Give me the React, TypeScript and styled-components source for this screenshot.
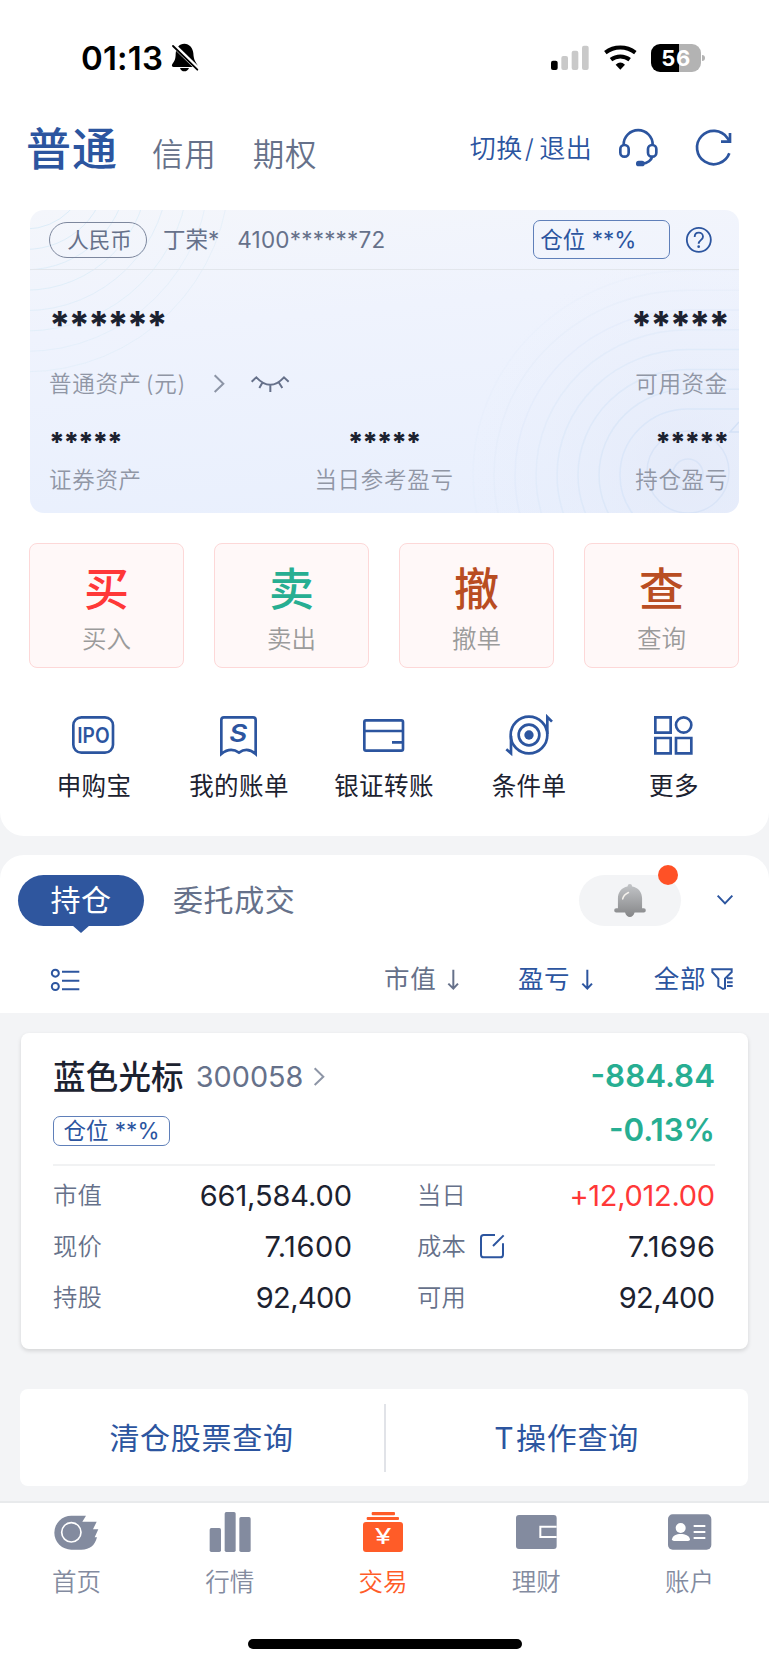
import React from 'react';
import styled, { createGlobalStyle } from 'styled-components';

const blue = '#2c559f';
const slate = '#66718a';
const muted = '#9096a5';
const ink = '#1c2230';
const green = '#27ae92';
const red = '#ff3838';
const orange = '#ff5c28';

const Global = createGlobalStyle`
  * { box-sizing: border-box; }
  body {
    margin: 0;
    background: #f3f4f6;
    font-family: Inter, 'Noto Sans CJK SC', sans-serif;
    line-height: 1.3;
    color: ${ink};
  }
  svg { display: block; flex: none; }
`;

const Screen = styled.main`
  width: 769px;
  height: 1665px;
  display: flex;
  flex-direction: column;
  overflow: hidden;
  background: #f3f4f6;
  white-space: nowrap;
`;

const AccountPanel = styled.section`
  height: 836px;
  flex: none;
  background: #fff;
  border-radius: 0 0 24px 24px;
`;

/* ---------- status bar ---------- */
const StatusBar = styled.div`
  height: 115px;
  padding: 0 64px 0 81px;
  display: flex;
  align-items: center;
  color: #000;
`;
const Clock = styled.span`
  font-size: 33px;
  line-height: 40px;
  font-weight: 560;
  letter-spacing: 0.2px;
  width: 89px;
`;
const StatusIcons = styled.div`
  margin-left: auto;
  display: flex;
  align-items: center;
  gap: 14.5px;
`;
const Battery = styled.div`
  display: flex;
  align-items: center;
  gap: 1px;
  &::after {
    content: '';
    width: 3px;
    height: 6px;
    background: #b3b3b3;
    border-radius: 0 3px 3px 0;
  }
`;
const BatteryBody = styled.div`
  width: 50px;
  height: 28px;
  border-radius: 9px;
  background: linear-gradient(90deg, #000 56%, #b3b3b3 56%);
  color: #fff;
  font-size: 22px;
  line-height: 28px;
  font-weight: 650;
  letter-spacing: 0.6px;
  text-align: center;
`;

/* ---------- header ---------- */
const Header = styled.header`
  height: 66px;
  padding: 0 38px 0 26px;
  display: flex;
  align-items: center;
`;
const ActiveAccount = styled.h1`
  margin: 0 34px 0 0;
  padding-top: 3px;
  font-size: 45px;
  line-height: 66px;
  font-weight: 500;
  color: ${blue};
  letter-spacing: 1px;
`;
const AccountTab = styled.span`
  margin-right: 36px;
  padding-top: 13px;
  font-size: 31.5px;
  font-weight: 350;
  line-height: 40px;
  letter-spacing: 0.8px;
  color: ${slate};
`;
const HeaderTools = styled.div`
  margin-left: auto;
  display: flex;
  align-items: center;
`;
const SwitchLink = styled.a`
  padding-top: 2px;
  color: ${blue};
  font-size: 26px;
  line-height: 40px;
  font-weight: 350;
  letter-spacing: 0.5px;
  margin-right: 27px;
  span { margin: 0 5px 0 2px; }
`;

/* ---------- asset card ---------- */
const AssetCard = styled.section`
  position: relative;
  height: 303px;
  margin: 29px 30px 0;
  border-radius: 14px;
  overflow: hidden;
  background: linear-gradient(175deg, #f4f6fb 0%, #eff3fd 35%, #e8effd 100%);
`;
const CardPattern = styled.svg`
  position: absolute;
  inset: 0;
`;
const CardHead = styled.div`
  position: relative;
  height: 60px;
  padding: 0 27px 0 19px;
  display: flex;
  align-items: center;
  border-bottom: 1px solid #e2e6ec;
  color: ${slate};
  font-size: 22.5px;
`;
const Currency = styled.span`
  width: 98px;
  height: 36px;
  border: 1px solid #7d879d;
  border-radius: 18px;
  font-size: 21.5px;
  line-height: 34px;
  text-align: center;
  padding-left: 3px;
`;
const Owner = styled.span`
  margin-left: 16px;
`;
const AccountNo = styled.span`
  margin-left: 18px;
  letter-spacing: 0.2px;
`;
const CardRatio = styled.span`
  margin-left: auto;
  margin-right: 16px;
  width: 137px;
  height: 39px;
  padding-left: 6px;
  border: 1px solid #5f7fb9;
  border-radius: 7px;
  line-height: 38px;
  color: ${blue};
  font-size: 22.5px;
`;
const CardBody = styled.div`
  position: relative;
  padding: 0 11px 0 19px;
`;
const Spread = styled.div<{ $h: number }>`
  height: ${(p) => p.$h}px;
  display: flex;
  justify-content: space-between;
  align-items: center;
`;
const Triple = styled.div<{ $h: number }>`
  height: ${(p) => p.$h}px;
  display: grid;
  grid-template-columns: 1fr auto 1fr;
  align-items: center;
  > :nth-child(2) { margin-right: 9px; }
  > :last-child { justify-self: end; }
`;
const TotalMask = styled.span`
  padding-top: 18px;
  font-size: 37px;
  line-height: 40px;
  font-weight: 800;
  letter-spacing: -2.1px;
`;
const Mask = styled.span`
  padding-top: 21px;
  font-size: 27px;
  line-height: 30px;
  font-weight: 800;
  letter-spacing: -1.2px;
`;
const CardLabel = styled.span`
  display: flex;
  align-items: center;
  font-size: 22.5px;
  font-weight: 350;
  letter-spacing: 0.7px;
  color: ${muted};
`;
const Unit = styled.span`
  margin: 0 28px 0 4px;
`;
const EyeButton = styled.span`
  margin-left: 27px;
`;

/* ---------- actions ---------- */
const Actions = styled.div`
  margin: 30px 30px 0 29px;
  display: grid;
  grid-template-columns: repeat(4, 1fr);
  gap: 30px;
`;
const ActionTile = styled.button`
  height: 125px;
  padding: 20px 0 0;
  border: 1px solid #fdd8d8;
  border-radius: 8px;
  background: #fff8f8;
  font-family: inherit;
  display: flex;
  flex-direction: column;
  align-items: center;
`;
const ActionGlyph = styled.span<{ $c: string }>`
  color: ${(p) => p.$c};
  font-size: 45px;
  line-height: 52px;
  font-weight: 500;
`;
const ActionLabel = styled.span`
  margin-top: 8px;
  font-size: 24.5px;
  line-height: 30px;
  font-weight: 350;
  color: #9b9b9b;
`;

const Shortcuts = styled.nav`
  margin: 42px 23px 0 21px;
  display: grid;
  grid-template-columns: repeat(5, 1fr);
`;
const Shortcut = styled.a`
  display: flex;
  flex-direction: column;
  align-items: center;
`;
const IconSlot = styled.div`
  height: 50px;
  display: flex;
  align-items: center;
`;
const ShortcutLabel = styled.span`
  padding-left: 1px;
  font-size: 24.5px;
  line-height: 52px;
  letter-spacing: 0.4px;
`;

/* ---------- positions ---------- */
const PositionsHead = styled.section`
  height: 158px;
  flex: none;
  margin-top: 19px;
  background: #fff;
  border-radius: 24px 24px 0 0;
`;
const TabRow = styled.div`
  height: 70px;
  padding: 20px 36px 0 18px;
  display: flex;
  align-items: center;
  font-size: 30px;
`;
const ActiveTab = styled.span`
  position: relative;
  width: 126px;
  height: 51px;
  border-radius: 26px;
  background: #2f569e;
  color: #fff;
  line-height: 50px;
  letter-spacing: 0.4px;
  text-align: center;
  &::after {
    content: '';
    position: absolute;
    left: 54px;
    top: 50px;
    border: 9px solid transparent;
    border-top: 8px solid #2f569e;
    border-bottom: 0;
  }
`;
const Tab = styled.span`
  margin-left: 29px;
  color: ${slate};
  letter-spacing: 0.6px;
`;
const AlertPill = styled.button`
  position: relative;
  margin: 0 36px 0 auto;
  width: 102px;
  height: 51px;
  border: 0;
  border-radius: 26px;
  background: #f3f4f6;
  display: grid;
  place-items: center;
  &::after {
    content: '';
    position: absolute;
    right: 3px;
    top: -10px;
    width: 20px;
    height: 20px;
    border-radius: 50%;
    background: #ff5126;
  }
`;
const FilterRow = styled.div`
  height: 68px;
  margin-top: 20px;
  padding: 0 36px 0 51px;
  display: flex;
  align-items: center;
`;
const Filter = styled.span<{ $c: string; $gap: number; $ml: string }>`
  display: flex;
  align-items: center;
  gap: ${(p) => p.$gap}px;
  margin-left: ${(p) => p.$ml};
  font-size: 25.5px;
  line-height: 40px;
  letter-spacing: 0.6px;
  color: ${(p) => p.$c};
`;

const StockCard = styled.article`
  height: 316px;
  flex: none;
  margin: 20px 21px 0;
  padding: 19px 33px 0 32px;
  background: #fff;
  border-radius: 8px;
  box-shadow: 0 2px 4px rgba(0, 0, 0, 0.13);
`;
const StockLine = styled.div<{ $h: number }>`
  height: ${(p) => p.$h}px;
  display: flex;
  align-items: center;
`;
const StockName = styled.h2`
  margin: 0;
  padding-top: 1px;
  font-size: 32.5px;
  line-height: 40px;
  font-weight: 500;
  letter-spacing: 0.2px;
`;
const StockCode = styled.span`
  margin: 0 11px 1px 12px;
  font-size: 28.8px;
  color: ${slate};
  font-weight: 400;
`;
const Profit = styled.strong`
  margin: 0 0 1px auto;
  font-size: 31.3px;
  font-weight: 580;
  color: ${green};
`;
const StockRatio = styled.span`
  width: 117px;
  height: 30px;
  border: 1px solid #5f7fb9;
  border-radius: 7px;
  line-height: 28px;
  font-size: 22.5px;
  text-align: center;
  color: ${blue};
`;
const Figures = styled.dl`
  margin: 4px 0 0;
  padding-top: 4px;
  border-top: 2px solid #f1f2f3;
  display: grid;
  grid-template-columns: 299px 298px;
  column-gap: 65px;
  grid-auto-rows: 51px;
`;
const Figure = styled.div`
  display: flex;
  align-items: center;
`;
const FigureLabel = styled.dt`
  font-size: 24.3px;
  font-weight: 350;
  letter-spacing: 0.3px;
  color: ${slate};
  margin-right: 14px;
`;
const FigureValue = styled.dd<{ $c?: string; $track: number }>`
  margin: 0 ${(p) => -p.$track}px 0 auto;
  font-size: 29px;
  line-height: 40px;
  letter-spacing: ${(p) => p.$track}px;
  color: ${(p) => p.$c || ink};
`;

const QueryBar = styled.div`
  height: 97px;
  flex: none;
  margin: 40px 21px 0 20px;
  border-radius: 8px;
  background: #fff;
  display: grid;
  grid-template-columns: 1fr 1fr;
  align-items: center;
`;
const QueryLink = styled.a`
  height: 68px;
  padding-right: 1px;
  line-height: 69px;
  text-align: center;
  font-size: 30px;
  letter-spacing: 0.7px;
  color: ${blue};
  & + & { border-left: 2px solid #e1e3e8; }
  & + &::first-letter { letter-spacing: 2.5px; }
`;

/* ---------- bottom navigation ---------- */
const BottomNav = styled.nav`
  height: 164px;
  margin-top: 15px;
  flex: none;
  background: #fff;
  border-top: 2px solid #e8eaec;
  display: flex;
  flex-direction: column;
  align-items: center;
`;
const NavItems = styled.div`
  width: 100%;
  height: 136px;
  padding: 5px 3px 0 0;
  display: grid;
  grid-template-columns: repeat(5, 1fr);
`;
const NavItem = styled.a<{ $active?: boolean }>`
  display: flex;
  flex-direction: column;
  align-items: center;
  font-size: 24.5px;
  font-weight: 350;
  line-height: 52px;
  color: ${(p) => (p.$active ? orange : '#838b9f')};
`;
const HomeIndicator = styled.div`
  width: 274px;
  height: 10px;
  border-radius: 5px;
  background: #000;
`;

type IconProps = {
  box: [number, number, number, number];
  color?: string;
  sw?: number;
  fill?: boolean;
  children: React.ReactNode;
};
/* Icons are drawn on a grid of three units per pixel. */
const Icon = ({ box, color = blue, sw = 6, fill, children }: IconProps) => (
  <svg
    width={box[2] / 3}
    height={box[3] / 3}
    viewBox={box.join(' ')}
    fill={fill ? color : 'none'}
    stroke={fill ? 'none' : color}
    strokeWidth={sw}
    overflow="visible"
  >
    {children}
  </svg>
);

const Muted = () => (
  <Icon box={[507, 129, 84, 90]} color="#000" fill>
    <path d="M550 131c15 0 26 13 27 29 1 18 5 24 11 33 3 5 0 8-5 8h-65c-5 0-7-4-4-9 6-8 10-15 10-31 1-18 11-30 26-30zM537 204h27c-3 7-8 10-14 10s-11-3-13-10z" />
    <path d="M515 133l78 76" stroke="#fff" strokeWidth="14" />
    <path d="M516 138l73 71" stroke="#000" strokeWidth="5.5" strokeLinecap="round" />
  </Icon>
);
const Signal = () => (
  <Icon box={[498, 130, 114, 84]} color="#c9c9c9" fill>
    <rect x="498" y="180" width="20" height="28" rx="6" fill="#000" />
    <rect x="529" y="166" width="20" height="42" rx="6" />
    <rect x="560" y="150" width="20" height="58" rx="6" />
    <rect x="591" y="135" width="20" height="73" rx="6" />
  </Icon>
);
const Wifi = () => (
  <Icon box={[655, 130, 98, 84]} color="#000" sw={12}>
    <path d="M659 156a74 74 0 0 1 90 0M676 177a46 46 0 0 1 56 0" />
    <path d="M690 192q14-13 28 0l-14 15z" fill="#000" stroke="none" />
  </Icon>
);
const Headset = () => (
  <Icon box={[703, 385, 115, 112]} sw={8}>
    <path d="M717 434v-2a43 43 0 0 1 87 0v2M803 467c-2 11-14 21-31 22" />
    <rect x="707" y="433" width="25" height="35" rx="12" />
    <rect x="790" y="433" width="25" height="35" rx="12" />
    <rect x="754" y="480" width="26" height="17" rx="8" fill={blue} stroke="none" />
  </Icon>
);
const Refresh = () => (
  <Icon box={[932, 389, 106, 106]} sw={8}>
    <path d="M1032 459a50 50 0 1 1-6-46l8 10M1034 398v26h-27" />
  </Icon>
);
const Help = () => (
  <Icon box={[905, 96, 77, 77]} sw={5.5}>
    <circle cx="943.5" cy="134.5" r="36" />
    <path d="M931 126c0-18 25-17 25-1 0 10-13 11-13 21" />
    <circle cx="943" cy="155" r="4" fill={blue} stroke="none" />
  </Icon>
);
const ChevronRight = () => (
  <Icon box={[641, 540, 31, 52]} color="#8d95a6">
    <path d="M643 541l26 25-26 25" />
  </Icon>
);
const ClosedEye = () => (
  <Icon box={[753, 543, 114, 50]} color={slate}>
    <path d="M755 560l14-13q42 45 83 0l14 13M787 563l-9 16M811 570v21M837 563l10 16" />
  </Icon>
);
const SortArrow = ({ color }: { color: string }) => (
  <Icon box={[189, 402, 32, 62]} color={color}>
    <path d="M205 404v57M190 446l15 15 14-15" />
  </Icon>
);

const shortcuts = [
  {
    label: '申购宝',
    icon: (
      <Icon box={[216, 558, 127, 114]} sw={8}>
        <rect x="220" y="562" width="119" height="106" rx="24" />
        <text x="232" y="638" fontSize="64" fontWeight="600" textLength="97" lengthAdjust="spacingAndGlyphs" fill={blue} stroke="none">IPO</text>
      </Icon>
    ),
  },
  {
    label: '我的账单',
    icon: (
      <Icon box={[660, 557, 112, 116]} sw={8}>
        <path d="M664 671v-102q0-8 8-8h87q8 0 8 8v102q-25-22-50-4-26-18-53 4z" />
        <text x="688" y="635" fontSize="72" fontWeight="600" fontStyle="italic" textLength="54" lengthAdjust="spacingAndGlyphs" fill={blue} stroke="none">S</text>
      </Icon>
    ),
  },
  {
    label: '银证转账',
    icon: (
      <Icon box={[1090, 567, 124, 99]} sw={8}>
        <rect x="1094" y="571" width="116" height="91" rx="5" />
        <path d="M1094 603h116M1177 637h33" />
      </Icon>
    ),
  },
  {
    label: '条件单',
    icon: (
      <Icon box={[361, 558, 140, 120]} sw={8}>
        <circle cx="433" cy="618" r="55" />
        <circle cx="433" cy="618" r="31" />
        <circle cx="433" cy="618" r="14" fill={blue} stroke="none" />
        <path d="M488 615v-51l14 14M379 620v53l-14-12" />
      </Icon>
    ),
  },
  {
    label: '更多',
    icon: (
      <Icon box={[808, 557, 116, 116]} sw={8}>
        <path d="M812 561h46v46h-46zM812 623h46v46h-46zM874 623h46v46h-46z" />
        <circle cx="897" cy="584" r="23" />
      </Icon>
    ),
  },
];

const actions = [
  { glyph: '买', label: '买入', color: red },
  { glyph: '卖', label: '卖出', color: green },
  { glyph: '撤', label: '撤单', color: '#b94d22' },
  { glyph: '查', label: '查询', color: '#b94d22' },
];

const EditIcon = () => (
  <Icon box={[286, 251, 72, 74]}>
    <path d="M331 254h-34q-8 0-8 8v51q0 8 8 8h50q8 0 8-8v-34M325 287l32-32" />
  </Icon>
);

const figures = [
  { label: '市值', value: '661,584.00', track: -0.1 },
  { label: '当日', value: '+12,012.00', color: red, track: -0.3 },
  { label: '现价', value: '7.1600', track: 0.5 },
  { label: '成本', value: '7.1696', icon: <EditIcon />, track: 0.5 },
  { label: '持股', value: '92,400', track: -0.6 },
  { label: '可用', value: '92,400', track: -0.6 },
];

const navItems = [
  {
    label: '首页',
    icon: (
      <Icon box={[164, 384, 130, 144]} color="#838b9f" fill>
        <path d="M213 407h44l-11 18h43l-11 23h16l-11 24h7c-6 24-21 37-47 37h-30a51 51 0 0 1 0-102z" />
        <circle cx="213" cy="457" r="29" fill="none" stroke="#fff" strokeWidth="5" />
      </Icon>
    ),
  },
  {
    label: '行情',
    icon: (
      <Icon box={[628, 384, 124, 144]} color="#838b9f" fill>
        <rect x="630" y="444" width="34" height="72" rx="5" />
        <rect x="675" y="396" width="33" height="120" rx="5" />
        <rect x="719" y="411" width="34" height="105" rx="5" />
      </Icon>
    ),
  },
  {
    label: '交易',
    active: true,
    icon: (
      <Icon box={[1089, 384, 120, 144]} color={orange} fill>
        <rect x="1089" y="426" width="120" height="90" rx="9" />
        <rect x="1115" y="396" width="70" height="10" rx="3" />
        <rect x="1100" y="411" width="97" height="9" rx="3" />
        <text x="1124" y="493" fontSize="64" fontWeight="400" textLength="50" lengthAdjust="spacingAndGlyphs" fill="#fff">¥</text>
      </Icon>
    ),
  },
  {
    label: '理财',
    icon: (
      <Icon box={[393, 384, 122, 144]} color="#838b9f" fill>
        <rect x="393" y="405" width="122" height="102" rx="9" />
        <path d="M515 440h-49v31h49" fill="none" stroke="#fff" strokeWidth="6" />
      </Icon>
    ),
  },
  {
    label: '账户',
    icon: (
      <Icon box={[849, 384, 130, 144]} color="#838b9f" fill>
        <rect x="849" y="403" width="130" height="106" rx="14" />
        <circle cx="887" cy="444" r="15" fill="#fff" />
        <path d="M861 478c2-12 13-16 26-16s26 4 28 16q0 5-6 5h-42q-6 0-6-5z" fill="#fff" />
        <path d="M926 438h35M926 456h35M926 474h35" stroke="#fff" strokeWidth="6" />
      </Icon>
    ),
  },
];

const rings = Array.from({ length: 8 }, (_, i) => i);

const RefreshSlot = styled.div`
  margin-left: 38px;
`;

export default function App() {
  return (
    <>
      <Global />
      <Screen>
        <AccountPanel>
          <StatusBar>
            <Clock>01:13</Clock>
            <Muted />
            <StatusIcons>
              <Signal />
              <Wifi />
              <Battery>
                <BatteryBody>56</BatteryBody>
              </Battery>
            </StatusIcons>
          </StatusBar>

          <Header>
            <ActiveAccount>普通</ActiveAccount>
            <AccountTab>信用</AccountTab>
            <AccountTab>期权</AccountTab>
            <HeaderTools>
              <SwitchLink>切换<span>/</span>退出</SwitchLink>
              <Headset />
              <RefreshSlot><Refresh /></RefreshSlot>
            </HeaderTools>
          </Header>

          <AssetCard>
            <CardPattern width="709" height="303" fill="none">
              <defs>
                <radialGradient id="glow" cx="658" cy="265" r="220" gradientUnits="userSpaceOnUse">
                  <stop offset="0" stopColor="#e3e9f8" stopOpacity="0.75" />
                  <stop offset="1" stopColor="#e8edfa" stopOpacity="0" />
                </radialGradient>
              </defs>
              <rect x="430" y="60" width="279" height="243" fill="url(#glow)" />
              {rings.map((i) => (
                <circle key={i} cx="-4" cy="-42" r={61 + i * 20.4} stroke="#dcecf8" strokeOpacity={1 - i * 0.07} />
              ))}
              {rings.map((i) => {
                const rx = 68 + i * 21;
                const ry = 66 + i * 19.8;
                return (
                  <path
                    key={i}
                    d={`M709 ${265 - ry}H658A${rx} ${ry} 0 0 0 658 ${265 + ry}`}
                    stroke="#d9e6f8"
                    strokeOpacity={0.9 - i * 0.11}
                    strokeWidth="1.5"
                  />
                );
              })}
              <circle cx="658" cy="264" r="15" stroke="#d9e4f7" strokeWidth="1.5" />
              <circle cx="658" cy="262" r="41" stroke="#d9e4f7" strokeWidth="1.5" />
              <path d="M709 212l-9 10h9" stroke="#d3e1f6" strokeWidth="1.5" />
            </CardPattern>
            <CardHead>
              <Currency>人民币</Currency>
              <Owner>丁荣*</Owner>
              <AccountNo>4100******72</AccountNo>
              <CardRatio>仓位 **%</CardRatio>
              <Help />
            </CardHead>
            <CardBody>
              <Spread $h={92}>
                <TotalMask>******</TotalMask>
                <TotalMask>*****</TotalMask>
              </Spread>
              <Spread $h={44}>
                <CardLabel>
                  普通资产<Unit>(元)</Unit>
                  <ChevronRight />
                  <EyeButton><ClosedEye /></EyeButton>
                </CardLabel>
                <CardLabel>可用资金</CardLabel>
              </Spread>
              <Triple $h={52}>
                <Mask>*****</Mask>
                <Mask>*****</Mask>
                <Mask>*****</Mask>
              </Triple>
              <Triple $h={44}>
                <CardLabel>证券资产</CardLabel>
                <CardLabel>当日参考盈亏</CardLabel>
                <CardLabel>持仓盈亏</CardLabel>
              </Triple>
            </CardBody>
          </AssetCard>

          <Actions>
            {actions.map((a) => (
              <ActionTile key={a.label}>
                <ActionGlyph $c={a.color}>{a.glyph}</ActionGlyph>
                <ActionLabel>{a.label}</ActionLabel>
              </ActionTile>
            ))}
          </Actions>

          <Shortcuts>
            {shortcuts.map((s) => (
              <Shortcut key={s.label}>
                <IconSlot>{s.icon}</IconSlot>
                <ShortcutLabel>{s.label}</ShortcutLabel>
              </Shortcut>
            ))}
          </Shortcuts>
        </AccountPanel>

        <PositionsHead>
          <TabRow>
            <ActiveTab>持仓</ActiveTab>
            <Tab>委托成交</Tab>
            <AlertPill>
              <svg width="32" height="33" viewBox="689 147 93 97">
                <defs>
                  <linearGradient id="bell" x1="0" y1="0" x2="0" y2="1">
                    <stop offset="0" stopColor="#c3c5c8" />
                    <stop offset="1" stopColor="#858688" />
                  </linearGradient>
                </defs>
                <path
                  d="M735 147q6 0 7 7c18 3 29 17 29 35v29h5q6 0 6 6.500t-6 6.500h-27q-4 13-14 13t-14-13h-26q-6 0-6-6.500t6-6.500h5v-29c0-18 11-32 28-35q1-7 7-7z"
                  fill="url(#bell)"
                />
                <path d="M714 191q2-12 17-19" fill="none" stroke="#f4f1ec" strokeWidth="4.5" strokeLinecap="round" />
              </svg>
            </AlertPill>
            <Icon box={[996, 182, 48, 28]}>
              <path d="M998 184l22 23 22-23" />
            </Icon>
          </TabRow>
          <FilterRow>
            <Icon box={[153, 398, 86, 68]}>
              <circle cx="166" cy="413.5" r="10.5" />
              <circle cx="166" cy="453.5" r="10.5" />
              <path d="M186 409h52M186 436h52M186 462h52" />
            </Icon>
            <Filter $c={slate} $gap={12} $ml="auto">市值<SortArrow color={slate} /></Filter>
            <Filter $c={blue} $gap={12} $ml="59px">盈亏<SortArrow color={blue} /></Filter>
            <Filter $c={blue} $gap={5} $ml="61px">
              全部
              <Icon box={[976, 400, 66, 66]}>
                <path d="M980 404h58v8l-20 20v29l-6 2-14-9v-22l-18-20zM1024 431h17M1024 443h17M1024 454h17" />
              </Icon>
            </Filter>
          </FilterRow>
        </PositionsHead>

        <StockCard>
          <StockLine $h={50}>
            <StockName>蓝色光标</StockName>
            <StockCode>300058</StockCode>
            <ChevronRight />
            <Profit>-884.84</Profit>
          </StockLine>
          <StockLine $h={58}>
            <StockRatio>仓位 **%</StockRatio>
            <Profit>-0.13%</Profit>
          </StockLine>
          <Figures>
            {figures.map((f) => (
              <Figure key={f.label}>
                <FigureLabel>{f.label}</FigureLabel>
                {f.icon}
                <FigureValue $c={f.color} $track={f.track}>{f.value}</FigureValue>
              </Figure>
            ))}
          </Figures>
        </StockCard>

        <QueryBar>
          <QueryLink>清仓股票查询</QueryLink>
          <QueryLink>T操作查询</QueryLink>
        </QueryBar>

        <BottomNav>
          <NavItems>
            {navItems.map((n) => (
              <NavItem key={n.label} $active={n.active}>
                {n.icon}
                <span>{n.label}</span>
              </NavItem>
            ))}
          </NavItems>
          <HomeIndicator />
        </BottomNav>
      </Screen>
    </>
  );
}
